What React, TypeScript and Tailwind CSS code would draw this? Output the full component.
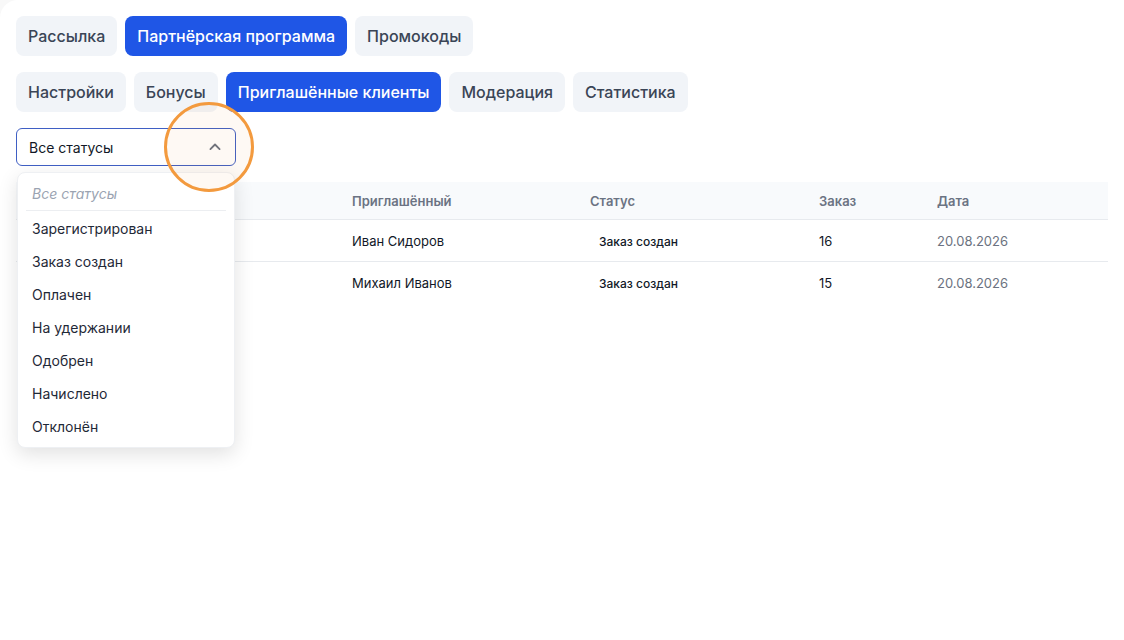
import React from "react";

const tabs1 = ["Рассылка", "Партнёрская программа", "Промокоды"];
const tabs2 = ["Настройки", "Бонусы", "Приглашённые клиенты", "Модерация", "Статистика"];
const options = ["Зарегистрирован", "Заказ создан", "Оплачен", "На удержании", "Одобрен", "Начислено", "Отклонён"];
const rows = [
  { name: "Иван Сидоров", status: "Заказ создан", order: "16", date: "20.08.2026" },
  { name: "Михаил Иванов", status: "Заказ создан", order: "15", date: "20.08.2026" },
];

function Tab({ label, active }: { label: string; active?: boolean }) {
  return (
    <button
      className={
        active
          ? "h-10 px-3 rounded-lg bg-[#1f56e6] text-white text-[16px] font-medium"
          : "h-10 px-3 rounded-lg bg-[#f1f4f8] text-[#3a4556] text-[16px] font-medium"
      }
    >
      {label}
    </button>
  );
}

export default function App() {
  return (
    <div className="min-h-screen bg-[#f8f8f8]" style={{ fontFamily: "Inter, 'Noto Sans', sans-serif" }}>
      <div className="relative bg-white rounded-tl-[18px] min-h-[640px] p-4">
        <div className="flex gap-2">
          {tabs1.map((t) => (
            <Tab key={t} label={t} active={t === "Партнёрская программа"} />
          ))}
        </div>
        <div className="flex gap-2 mt-4">
          {tabs2.map((t) => (
            <Tab key={t} label={t} active={t === "Приглашённые клиенты"} />
          ))}
        </div>

        <div className="relative mt-4 w-[220px] z-20">
          <div className="h-[38px] rounded-md border border-[#3f5fc4] bg-white flex items-center justify-between pl-[12px] pr-[10px] text-[14px] text-[#111827]">
            <span>Все статусы</span>
            <svg width="20" height="20" viewBox="0 0 24 24" fill="none" stroke="#6b7280" strokeWidth="2.2" strokeLinecap="round" strokeLinejoin="round">
              <path d="M6.5 14.5l5.5-5.5 5.5 5.5" />
            </svg>
          </div>
          <div className="absolute left-px top-[44px] w-[218px] bg-white rounded-lg shadow-[0_6px_20px_rgba(0,0,0,0.12)] border border-[#eef0f3] py-1">
            <div className="h-[33px] flex items-center px-[14px] text-[14px] italic text-[#9aa3b1]">Все статусы</div>
            <div className="mx-2 border-b border-[#eceef1] mb-px" />
            {options.map((o) => (
              <div key={o} className="h-[33px] flex items-center px-[14px] text-[14px] text-[#1f2937]">
                {o}
              </div>
            ))}
          </div>
        </div>

        <div className="mt-4">
          <div className="grid grid-cols-[320px_238px_229px_118px_1fr] h-[38px] items-center pt-0.5 bg-[#f8fafc] border-b border-[#e7eaee] text-[13px] font-semibold text-[#6b7383]">
            <div className="px-4"></div>
            <div className="px-4">Приглашённый</div>
            <div className="px-4">Статус</div>
            <div className="px-4">Заказ</div>
            <div className="px-4">Дата</div>
          </div>
          {rows.map((r, i) => (
            <div
              key={i}
              className={
                "grid grid-cols-[320px_238px_229px_118px_1fr] h-[42px] items-center pt-0.5 text-[13px] text-[#111827]" +
                (i === 0 ? " border-b border-[#e7eaee]" : "")
              }
            >
              <div className="px-4"></div>
              <div className="px-4">{r.name}</div>
              <div className="px-4">
                <span className="inline-block px-[9px] text-[12px] font-medium text-[#111827]">{r.status}</span>
              </div>
              <div className="px-4">{r.order}</div>
              <div className="px-4 text-[#6b7280]">{r.date}</div>
            </div>
          ))}
        </div>

        <div className="absolute left-[164px] top-[102px] w-[90px] h-[90px] rounded-full border-[3px] border-[#f39a3e] bg-[rgba(243,154,62,0.06)] z-30 pointer-events-none" />
      </div>
    </div>
  );
}
